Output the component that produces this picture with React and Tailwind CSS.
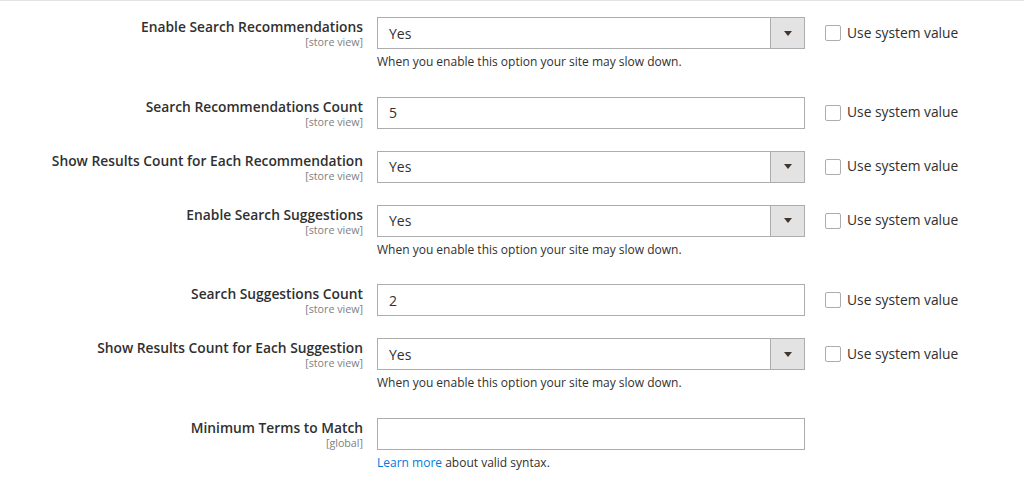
const ROWS = [
  { label: 'Enable Search Recommendations', scope: '[store view]', type: 'select', value: 'Yes', system: true, note: 'slow' },
  { label: 'Search Recommendations Count', scope: '[store view]', type: 'input', value: '5', system: true },
  { label: 'Show Results Count for Each Recommendation', scope: '[store view]', type: 'select', value: 'Yes', system: true },
  { label: 'Enable Search Suggestions', scope: '[store view]', type: 'select', value: 'Yes', system: true, note: 'slow' },
  { label: 'Search Suggestions Count', scope: '[store view]', type: 'input', value: '2', system: true },
  { label: 'Show Results Count for Each Suggestion', scope: '[store view]', type: 'select', value: 'Yes', system: true, note: 'slow' },
  { label: 'Minimum Terms to Match', scope: '[global]', type: 'input', value: '', system: false, note: 'syntax' },
]

function Control({ row }) {
  if (row.type === 'select') {
    return (
      <div className="flex h-[32px] w-full border border-[#adadad] bg-white">
        <div className="flex-1 flex items-center pl-[11px] text-[14px] text-[#303030]">{row.value}</div>
        <div className="w-[34px] flex items-center justify-center bg-[#e3e3e3] border-l border-[#adadad]">
          <svg width="8" height="5" viewBox="0 0 8 5">
            <path d="M0 0 L8 0 L4 5 Z" fill="#41362f" />
          </svg>
        </div>
      </div>
    )
  }
  return (
    <div className="flex items-center h-[32px] w-full border border-[#adadad] bg-white pl-[11px] text-[14px] text-[#303030]">
      {row.value}
    </div>
  )
}

function Note({ kind }) {
  if (kind === 'syntax') {
    return (
      <div className="pt-[4px] pb-[4px] text-[12px] leading-[17.5px] text-[#303030]">
        <span className="text-[#007bdb]">Learn more</span> about valid syntax.
      </div>
    )
  }
  return (
    <div className="pt-[4px] pb-[4px] text-[12px] leading-[17.5px] text-[#303030]">
      When you enable this option your site may slow down.
    </div>
  )
}

export default function App() {
  return (
    <div className="w-[1024px] h-[488px] bg-white border-t border-[#e3e3e3] pt-[16px] overflow-hidden" style={{ fontFamily: '"Open Sans", "Liberation Sans", sans-serif' }}>
      {ROWS.map((row, i) => (
        <div key={i} className="flex items-start mb-[22px]">
          <div className="w-[363px] shrink-0 text-right pt-[1px]">
            <div className="text-[13.8px] font-semibold leading-[17px] text-[#303030]">{row.label}</div>
            <div className="text-[10.7px] leading-[14px] text-[#808080]">{row.scope}</div>
          </div>
          <div className="w-[428px] shrink-0 ml-[14px]">
            <Control row={row} />
            {row.note && <Note kind={row.note} />}
          </div>
          {row.system && (
            <label className="flex items-center ml-[20px] h-[32px] gap-[6px] text-[13.8px] text-[#303030]">
              <span className="w-[16px] h-[16px] border border-[#adadad] rounded-[2px] bg-white" />
              Use system value
            </label>
          )}
        </div>
      ))}
    </div>
  )
}
